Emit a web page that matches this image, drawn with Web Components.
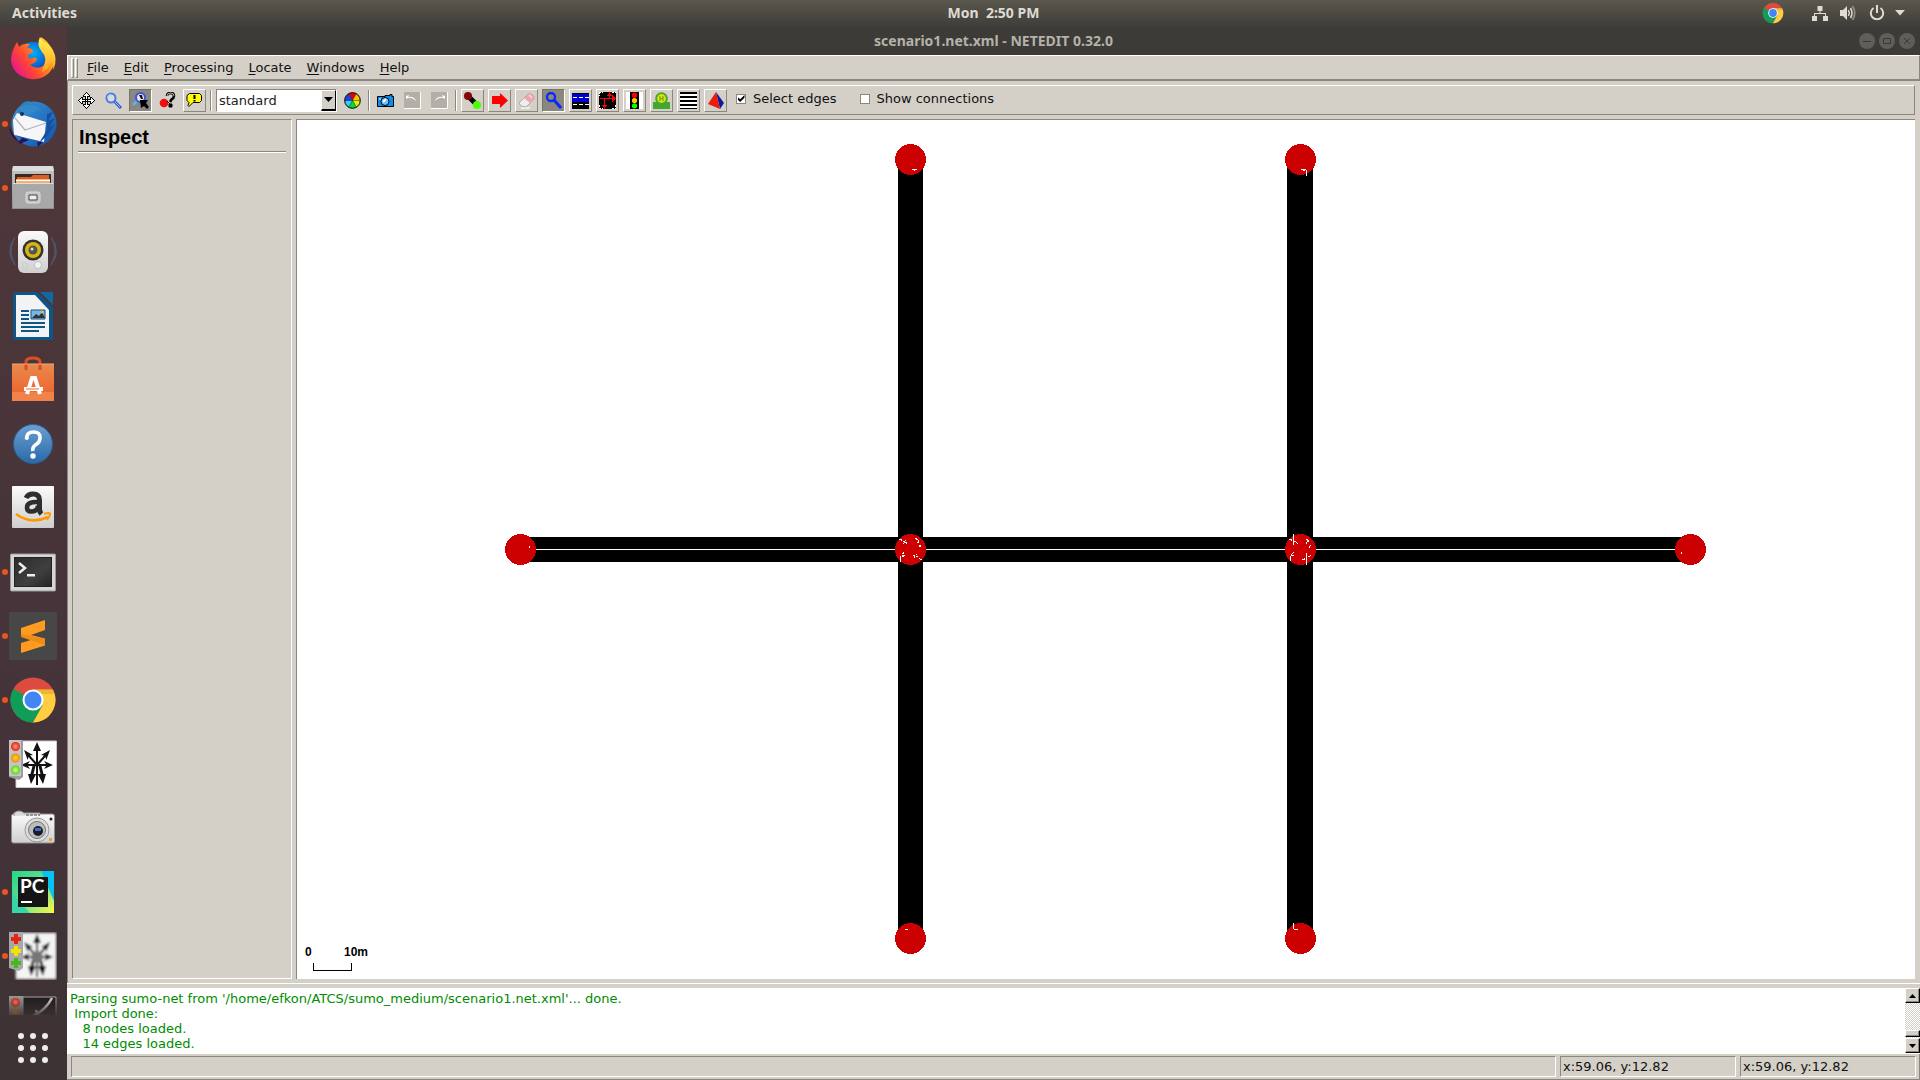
<!DOCTYPE html>
<html lang="en">
<head>
<meta charset="utf-8">
<title>scenario1.net.xml - NETEDIT 0.32.0</title>
<style>
html, body { height: 100%; margin: 0; overflow: hidden; }
body {
  --face: #d4d0c8; --shade: #8a8780; --hilite: #ffffff;
  --ui: "DejaVu Sans", sans-serif; --shell: "Noto Sans", "Open Sans", sans-serif;
  background: #3c3b37; color: #111; font: 13px/15px var(--ui);
}
</style>
</head>
<body>
<desk-shell></desk-shell>
<script>
const define = (name, html, setup) => {
  const tpl = document.createElement('template');
  tpl.innerHTML = html;
  customElements.define(name, class extends HTMLElement {
    constructor() {
      super();
      this.attachShadow({ mode: 'open' }).append(tpl.content.cloneNode(true));
    }
    connectedCallback() { if (setup) setup(this, this.shadowRoot); }
  });
};

const chromeLogo = `
  <circle cx="24" cy="24" r="22.5" fill="#dd4b3e"/>
  <path d="M24 24L4.500 12.750A22.500 22.500 0 0 0 24 46.500L33.700 29.600z" fill="#0f9d58"/>
  <path d="M24 13.500H43.900A22.500 22.500 0 0 1 24 46.500L33.500 29.500z" fill="#ffcd40"/>
  <path d="M24 13.500H43.900l2 4.500H30z" fill="#c98d1c" opacity=".35"/>
  <circle cx="24" cy="24" r="10.500" fill="#fff"/><circle cx="24" cy="24" r="8.500" fill="#4285f4"/>`;

/* ---- desktop ---- */
define('desk-shell', `
<style>
  :host { display: flex; flex-direction: column; height: 100vh; }
  .work { flex: 1; min-height: 0; display: flex; }
  net-window { flex: 1; min-width: 0; }
</style>
<top-bar></top-bar>
<div class="work"><dock-bar></dock-bar><net-window></net-window></div>`);

define('top-bar', `
<style>
  :host { display: grid; grid-template-columns: 67px 1fr auto 1fr; align-items: center; box-sizing: border-box; height: 27px; padding-bottom: 2px; flex: none;
    background: linear-gradient(#5a574e, #3e3d38); color: #dfdbd2; font: bold 14px/20px var(--shell); }
  button { font: inherit; color: inherit; background: none; border: 0; padding: 0; white-space: nowrap; }
  .act { justify-self: start; padding-left: 12px; }
  .clock { grid-column: 3; white-space: pre; }
  .tray { display: flex; justify-content: flex-end; align-items: center; padding-right: 15px; }
  svg { display: block; }
  .chrome { margin-right: 28px; } .net { margin-right: 12px; } .vol { margin-right: 13px; } .pow { margin-right: 10px; }
</style>
<button class="act">Activities</button>
<button class="clock">Mon  2:50 PM</button>
<div class="tray">
  <svg class="chrome" width="22" height="22" viewBox="0 0 48 48">${chromeLogo}</svg>
  <svg class="net" width="16" height="16" viewBox="0 0 16 16" fill="#dfdbd2"><path d="M5.500 1h5v5H8.500v2H14v3h2v5h-5v-5h2V9H3v2h2v5H0v-5h2V8h5.500V6h-2z"/></svg>
  <svg class="vol" width="16" height="16" viewBox="0 0 16 16"><path d="M0 5h3l4-4v14l-4-4H0z" fill="#dfdbd2"/><path d="M8.500 5q1.600 3 0 6M10.500 3q3 5 0 10" fill="none" stroke="#dfdbd2" stroke-width="1.500"/><path d="M12.500 1q4.500 7 0 14" fill="none" stroke="#8d8a82" stroke-width="1.800"/></svg>
  <svg class="pow" width="16" height="16" viewBox="0 0 16 16" fill="none" stroke="#dfdbd2" stroke-width="2"><path d="M4.500 3a6.200 6.200 0 1 0 7 0M8 0v8"/></svg>
  <svg width="10" height="6" viewBox="0 0 10 6"><path d="M0 0h10L5 5.500z" fill="#dfdbd2"/></svg>
</div>`);

define('dock-item', `
<style>
  :host { display: block; flex: none; height: 64px; position: relative; }
  button { all: unset; display: flex; width: 66px; height: 64px; align-items: center; justify-content: center; }
  :host([running])::before { content: ""; position: absolute; left: 2px; top: 29px; width: 6px; height: 6px; border-radius: 50%; background: #e95420; }
  :host([fading]) { -webkit-mask-image: linear-gradient(#000 8px, transparent 30px); mask-image: linear-gradient(#000 8px, transparent 30px); }
</style>
<button><slot></slot></button>`, (el, root) => {
  root.querySelector('button').setAttribute('aria-label', el.getAttribute('label'));
});

const junctionArrows = `
  <g fill="#111"><path d="M27 8h2v37h-2zM28 2l4 9h-8z"/>
  <path d="M12 25l9-4-2 3h18l-2-3 9 4-9 4 2-3H19l2 3z"/>
  <path d="M15 10l9 5-3 .5 8 9-1.500 1.500-8-9-.8 3zM41 10l-9 5 3 .5-8 9 1.500 1.500 8-9 .8 3z"/>
  <path d="M22 44l-3-10h2.500L23.500 26h3l-2 8h2.700zM34 44l3-10h-2.500L32.500 26h-3l2 8h-2.700z"/></g>`;

define('dock-bar', `
<style>
  :host { display: flex; flex-direction: column; width: 67px; flex: none; background: linear-gradient(#503739, #45343a 60%, #3d3234); }
  .apps { flex: 1; min-height: 0; overflow: hidden; display: flex; flex-direction: column; padding-top: 1px; }
  svg { display: block; }
  .grid { all: unset; flex: none; height: 65px; width: 66px; display: flex; align-items: center; justify-content: center; }
</style>
<svg width="0" height="0" style="position:absolute"><defs>
  <radialGradient id="ffb" cx=".5" cy=".3" r=".6"><stop offset="0" stop-color="#00b3f4"/><stop offset=".6" stop-color="#0a66d8"/><stop offset="1" stop-color="#292d8a"/></radialGradient>
  <linearGradient id="ffo" x1="1" y1="0" x2="0" y2=".7"><stop offset="0" stop-color="#fff44f"/><stop offset=".35" stop-color="#ffa21c"/><stop offset=".7" stop-color="#ff4632"/><stop offset="1" stop-color="#e8178c"/></linearGradient>
  <linearGradient id="ffy" x1="0" y1="0" x2="0" y2="1"><stop offset="0" stop-color="#fff44f"/><stop offset="1" stop-color="#ffa01e"/></linearGradient>
  <linearGradient id="tb" x1="0" y1="0" x2="1" y2="1"><stop offset="0" stop-color="#3a9be0"/><stop offset="1" stop-color="#134fa6"/></linearGradient>
  <linearGradient id="gr" x1="0" y1="0" x2="0" y2="1"><stop offset="0" stop-color="#c9c9c9"/><stop offset="1" stop-color="#8e8e8e"/></linearGradient>
  <linearGradient id="wh" x1="0" y1="0" x2="0" y2="1"><stop offset="0" stop-color="#fafafa"/><stop offset="1" stop-color="#cfcfcf"/></linearGradient>
  <linearGradient id="or" x1="0" y1="0" x2="0" y2="1"><stop offset="0" stop-color="#e8894f"/><stop offset="1" stop-color="#ee5f26"/></linearGradient>
  <linearGradient id="bl" x1="0" y1="0" x2="0" y2="1"><stop offset="0" stop-color="#6a9fd4"/><stop offset="1" stop-color="#2a6aa8"/></linearGradient>
  <linearGradient id="dk" x1="0" y1="0" x2="1" y2="1"><stop offset="0" stop-color="#2c2c2c"/><stop offset=".6" stop-color="#3f3f3f"/><stop offset="1" stop-color="#262626"/></linearGradient>
  <linearGradient id="pcg" x1="0" y1="0" x2="1" y2="1"><stop offset="0" stop-color="#21d789"/><stop offset=".5" stop-color="#66e08c"/><stop offset="1" stop-color="#fcf84a"/></linearGradient>
  <radialGradient id="lr"><stop offset="0" stop-color="#ff9b86"/><stop offset="1" stop-color="#e3230c"/></radialGradient>
  <radialGradient id="ly"><stop offset="0" stop-color="#ffd54d"/><stop offset="1" stop-color="#f08c00"/></radialGradient>
  <radialGradient id="lg"><stop offset="0" stop-color="#e2ff8c"/><stop offset="1" stop-color="#4ed411"/></radialGradient>
  <filter id="soft"><feGaussianBlur stdDeviation=".9"/></filter>
</defs></svg>
<nav class="apps">
<dock-item label="Firefox"><svg width="48" height="48" viewBox="0 0 48 48">
  <circle cx="24" cy="24" r="18" fill="url(#ffb)"/>
  <path d="M8 6l2 5q4-4 11-3l-3 4q6 0 6 4l-5 3 1 4q7-3 8 0 0 3-7 6 8 6 16-1 4-5 2-12-8-3-7-15 7 4 10 11 8 14-2 25-10 9-23 5Q2 37 2 22 3 14 8 6z" fill="url(#ffo)"/>
  <path d="M31 1q-4 8 2 15 6 6 1 15l-1 5q8-3 9-12 4 8 1 12 5-8 3-17Q43 9 35 6q-3-2-4-5z" fill="url(#ffy)"/></svg></dock-item>
<dock-item label="Thunderbird" running><svg width="48" height="48" viewBox="0 0 48 48">
  <circle cx="25" cy="24" r="22.500" fill="url(#tb)"/><path d="M9 9Q14 0 21 1l-3 3q10-3 17 5l-15 8-5-4-9 5z" fill="#2b7fc4"/>
  <path d="M4 20l4-7 29 9-2 20L5 35z" fill="#f6f6f8"/><path d="M6 18l10 12 21-7" fill="none" stroke="#b4b4bb" stroke-width="1.200"/>
  <path d="M0 26q0 9 9 16l4-4-9-4zM28 42l6 0-5 5zM4 34l16 6-9 4z" fill="#26145e"/>
  <path d="M9 8l8 8 14-7q-9-8-22-1z" fill="#3288c9"/><path d="M38 14l6-2-5 9 7-3-6 9 6-3-8 12-8 7 8-13z" fill="#174f9e"/><circle cx="13" cy="14" r="2" fill="#12325d"/></svg></dock-item>
<dock-item label="Files" running><svg width="48" height="48" viewBox="0 0 48 48">
  <path d="M4 2h40l1 7v36H3V9z" fill="url(#gr)"/><path d="M4 2h40l1 5H3z" fill="#ddd"/><path d="M6 10h36v10H6z" fill="#3a2b22"/>
  <path d="M8 13h14l2-2h16v9H8z" fill="#d8602b"/><path d="M7 15h34v5H7z" fill="#f4b072"/><path d="M7 16h34v1H7z" fill="#fff"/>
  <path d="M4 19h40v25H4z" fill="#a8a8a8"/><path d="M4 19h40v1H4z" fill="#ddd"/><rect x="17" y="28" width="14" height="11" rx="2" fill="#c4c4c4" stroke="#ddd"/><path d="M20 31h8v5h-8z" fill="#eee" stroke="#444"/></svg></dock-item>
<dock-item label="Rhythmbox"><svg width="48" height="48" viewBox="0 0 48 48">
  <path d="M6 9q-8 14 0 28M42 9q8 14 0 28M3 14q-4 9 0 18M45 14q4 9 0 18" fill="none" stroke="#5577a2" stroke-width="1.500" opacity=".45"/>
  <rect x="9" y="3" width="30" height="42" rx="6" fill="url(#wh)"/><circle cx="24" cy="22" r="10.500" fill="#34332f"/><circle cx="24" cy="22" r="8" fill="#d7b512"/><circle cx="24" cy="22" r="4.500" fill="#55564c"/><circle cx="23" cy="21" r="1.500" fill="#ddd"/><circle cx="29" cy="37" r="3.500" fill="#f3f3f3" stroke="#c0c0c0"/><path d="M14 35h4v5h-4z" fill="none" stroke="#ccc"/></svg></dock-item>
<dock-item label="LibreOffice Writer"><svg width="48" height="48" viewBox="0 0 48 48">
  <path d="M6 0h22l16 16v32H6q-2 0-2-2V2q0-2 2-2z" fill="#0e5586"/><path d="M7 3h19l14 15v27H7z" fill="#f2f3f5"/><path d="M31 0h13v13z" fill="#0f69a6"/>
  <path d="M12 18h8v2h-8zM12 22h8v2h-8zM12 26h8v2h-8zM12 30h24v2H12zM12 34h24v2H12zM12 38h18v2H12z" fill="#0e5586"/><path d="M22 18h14v9H22z" fill="#77b7e6" stroke="#0e5586"/><path d="M23 26l4-4 3 2 3-4 3 6z" fill="#333"/><circle cx="33" cy="20" r="1.500" fill="#f5b82e"/></svg></dock-item>
<dock-item label="Ubuntu Software"><svg width="48" height="48" viewBox="0 0 48 48">
  <path d="M3 8h42v37H3z" fill="url(#or)"/><path d="M3 36h42v9H3z" fill="#f0824a"/><path d="M17 14V6q0-4 7-4t7 4v8" fill="none" stroke="#d84f24" stroke-width="3"/><path d="M3 8h42" stroke="#f4a677"/>
  <path d="M18 38l5-16h3l5 16" fill="none" stroke="#fff" stroke-width="4"/><path d="M15 31h19v4H15z" fill="#fff"/><path d="M17 33h13" stroke="#ee6a30"/></svg></dock-item>
<dock-item label="Help"><svg width="48" height="48" viewBox="0 0 48 48">
  <circle cx="24" cy="24" r="19.500" fill="url(#bl)" stroke="#2c5f92"/><path d="M17.500 19q0-7 7-7t6.500 6q0 4-4 6.500T24 31" fill="none" stroke="#fff" stroke-width="3.600"/><circle cx="17.800" cy="18" r="2" fill="#fff"/><circle cx="24" cy="36" r="2.700" fill="#fff"/></svg></dock-item>
<dock-item label="Amazon"><svg width="48" height="48" viewBox="0 0 48 48">
  <rect x="3" y="2" width="42" height="42" rx="1" fill="url(#wh)"/>
  <path d="M17 14q2-4 7-4 6.500 0 6.500 6v9q0 3 2 5" fill="none" stroke="#2e2e30" stroke-width="5"/><path d="M29 18q-11-.5-11 5.500 0 4 4 4 7 0 7-6" fill="none" stroke="#2e2e30" stroke-width="4.500"/>
  <path d="M7 30q15 11 32 3" fill="none" stroke="#ff9900" stroke-width="2.600"/><path d="M35 30q6-2 6 0t-3 6" fill="none" stroke="#ff9900" stroke-width="2"/></svg></dock-item>
<dock-item label="Terminal" running><svg width="48" height="48" viewBox="0 0 48 48">
  <rect x="1.500" y="6" width="45" height="37" rx="1" fill="#d6d6d6" stroke="#9a9a9a"/><path d="M5 9h38v30H5z" fill="#222"/><path d="M6 10h36v28H6z" fill="url(#dk)"/>
  <path d="M10 15l6 5-6 5" fill="none" stroke="#eee" stroke-width="2.500"/><path d="M18 26h8v2.500h-8z" fill="#eee"/></svg></dock-item>
<dock-item label="Sublime Text" running><svg width="48" height="48" viewBox="0 0 48 48">
  <rect width="48" height="48" rx="2" fill="#474747"/><path d="M12 16l24-8v10l-14 5 14 3.500v7L12 41V31l13-4-13-4z" fill="#ff9b1f"/><path d="M12 22l24 5v6l-24-8z" fill="#ee8c16"/></svg></dock-item>
<dock-item label="Google Chrome" running><svg width="48" height="48" viewBox="0 0 48 48">${chromeLogo}</svg></dock-item>
<dock-item label="SUMO"><svg width="48" height="48" viewBox="0 0 48 48">
  <path d="M7 1h40.500v46.500H7z" fill="#fff" stroke="#ccc"/>${junctionArrows}
  <path d="M0 0h14v37l-4 3L0 37z" fill="#9c9c9c"/><path d="M0 0h12v36H0z" fill="#c4c4c4"/><circle cx="6.500" cy="6.500" r="4.500" fill="url(#lr)"/><circle cx="6.500" cy="18" r="4.500" fill="url(#ly)"/><circle cx="6.500" cy="30" r="4.500" fill="url(#lg)"/></svg></dock-item>
<dock-item label="Camera"><svg width="48" height="48" viewBox="0 0 48 48">
  <rect x="2.500" y="10" width="43" height="29" rx="2" fill="url(#wh)" stroke="#8c8c8c"/><path d="M5 12V9q5-4 10 0l16 0v2" fill="#d8d8d8" stroke="#999"/><path d="M17 11h14" stroke="#777" stroke-width="1.500" stroke-dasharray="3 1"/>
  <circle cx="28" cy="26" r="12" fill="#dcdcdc" stroke="#999"/><circle cx="28" cy="26" r="8.500" fill="#bcbcbc" stroke="#777"/><circle cx="29" cy="27" r="5" fill="#171b2c"/><path d="M26 24h6v3h-6z" fill="#426bb5"/><circle cx="42" cy="15" r="1.500" fill="#222"/><path d="M40 34h3v3h-3z" fill="#f0a030"/></svg></dock-item>
<dock-item label="PyCharm" running><svg width="48" height="48" viewBox="0 0 48 48">
  <path d="M3 3h42v42H3z" fill="url(#pcg)"/><path d="M32 3h13v30z" fill="#07c3f2"/><path d="M3 25v20h18z" fill="#36d6a7"/><path d="M9 9h30v30H9z" fill="#151515"/><text x="11" y="25" font-family="Lato, sans-serif" font-weight="bold" font-size="19" fill="#fff">PC</text><path d="M12 33h11v2H12z" fill="#fff"/></svg></dock-item>
<dock-item label="NETEDIT" running><svg width="48" height="48" viewBox="0 0 48 48"><g filter="url(#soft)">
  <path d="M7 1h40v46H7z" fill="#f4f4f4" stroke="#bbb"/>${junctionArrows}<circle cx="28" cy="25" r="6" fill="#777"/></g>
  <path d="M0 0h14v36l-4 3-10-3z" fill="#a8a8a8"/><g stroke-width="4"><path d="M7 2v10M2 7h10" stroke="#e52416"/><path d="M7 14v10M2 19h10" stroke="#f3e500"/><path d="M7 26v10M2 31h10" stroke="#49b71c"/></g></svg></dock-item>
<dock-item label="sumo-gui" fading><svg width="48" height="48" viewBox="0 0 48 48">
  <path d="M14 1h33v46H14z" fill="#1e1c1e" stroke="#aaa"/><path d="M16 22q18-3 27-20M27 14q2 10 14 14" fill="none" stroke="#ddd" stroke-width="2.500"/><path d="M0 0h14v37H0z" fill="#999"/><circle cx="6.500" cy="6.500" r="4.500" fill="url(#lr)"/><circle cx="6.500" cy="18" r="4.500" fill="url(#ly)"/></svg></dock-item>
</nav>
<button class="grid" aria-label="Show Applications"><svg width="30" height="30" viewBox="0 0 30 30" fill="#f0eeec"><circle cx="3" cy="3" r="3"/><circle cx="15" cy="3" r="3"/><circle cx="27" cy="3" r="3"/><circle cx="3" cy="15" r="3"/><circle cx="15" cy="15" r="3"/><circle cx="27" cy="15" r="3"/><circle cx="3" cy="27" r="3"/><circle cx="15" cy="27" r="3"/><circle cx="27" cy="27" r="3"/></svg></button>`);

/* ---- application window ---- */
define('net-window', `
<style>
  :host { display: flex; flex-direction: column; background: var(--face); }
  .body { flex: 1; min-height: 0; display: flex; flex-direction: column; gap: 4px; padding: 4px 5px 4px 4px; border-left: 1px solid var(--shade); }
  .split { flex: 1; min-height: 0; display: flex; gap: 4px; }
  network-view { flex: 1; min-width: 0; }
  .sash { height: 5px; flex: none; box-sizing: border-box; border-top: 1px solid var(--hilite); }
</style>
<title-bar>scenario1.net.xml - NETEDIT 0.32.0</title-bar>
<menu-bar></menu-bar>
<div class="body">
  <tool-bar></tool-bar>
  <div class="split"><inspect-panel>Inspect</inspect-panel><network-view></network-view></div>
</div>
<div class="sash"></div>
<message-log></message-log>
<status-bar></status-bar>`);

define('title-bar', `
<style>
  :host { display: grid; grid-template-columns: 1fr auto 1fr; align-items: center; height: 28px; flex: none; background: #3c3b37; color: #b5b2a9; font: bold 14px/20px var(--shell); }
  .t { grid-column: 2; }
  .b { display: flex; justify-content: flex-end; gap: 4px; padding-right: 5px; }
  button { all: unset; width: 16px; height: 16px; border-radius: 50%; background: #5f5e59; }
  svg { display: block; } path { fill: none; stroke: #3a3935; stroke-width: 1; }
</style>
<span class="t"><slot></slot></span>
<div class="b">
  <button aria-label="Minimize"><svg width="16" height="16"><path d="M4 8.500h8"/></svg></button>
  <button aria-label="Maximize"><svg width="16" height="16"><path d="M4.500 5.500h7v5h-7z"/></svg></button>
  <button aria-label="Close"><svg width="16" height="16"><path d="M5 5l6 6M11 5l-6 6"/></svg></button>
</div>`);

define('menu-bar', `
<style>
  :host { display: flex; align-items: center; box-sizing: border-box; height: 26px; flex: none; padding-left: 3px; border: 1px solid; border-width: 1px 1px 2px; border-color: var(--hilite) var(--shade) var(--shade) var(--hilite); }
  i { width: 1px; height: 18px; margin-right: 1px; border: 1px solid; border-color: var(--hilite) var(--shade) var(--shade) var(--hilite); }
  nav { display: flex; gap: 15px; padding-left: 8px; }
  button { all: unset; }
  u { text-underline-offset: 2px; }
</style>
<i></i><i></i>
<nav><button><u>F</u>ile</button><button><u>E</u>dit</button><button><u>P</u>rocessing</button><button><u>L</u>ocate</button><button><u>W</u>indows</button><button><u>H</u>elp</button></nav>`);

define('tool-button', `
<style>
  :host { display: block; flex: none; }
  button { all: unset; box-sizing: border-box; width: 23px; height: 23px; display: flex; align-items: center; justify-content: center; border: 1px solid transparent; }
  :host([raised]) button { border-color: var(--hilite) var(--shade) var(--shade) var(--hilite); }
  :host([pressed]) button { background: #8a8780; border-color: #77746e var(--hilite) var(--hilite) #77746e; }
  ::slotted(svg) { display: block; }
</style>
<button><slot></slot></button>`, (el, root) => {
  root.querySelector('button').setAttribute('aria-label', el.getAttribute('label'));
});

define('tool-separator', `
<style>:host { display: block; box-sizing: border-box; width: 2px; height: 21px; border-left: 1px solid var(--shade); border-right: 1px solid var(--hilite); }</style>`);

define('view-scheme', `
<style>
  :host { display: block; position: relative; width: 121px; height: 23px; }
  select { appearance: none; box-sizing: border-box; width: 100%; height: 100%; margin: 0; padding: 0 18px 0 2px; border: 1px solid; border-color: var(--shade) var(--hilite) var(--hilite) var(--shade); border-radius: 0; background: #fff; color: #222; font: inherit; outline: 0; }
  span { position: absolute; right: 1px; top: 1px; width: 15px; height: 21px; box-sizing: border-box; background: var(--face); border: 1px solid; border-width: 1px 1px 2px; border-color: var(--hilite) #000 #000 var(--hilite); display: flex; align-items: center; justify-content: center; pointer-events: none; }
</style>
<select aria-label="View scheme"><option>standard</option><option>real world</option></select>
<span><svg width="9" height="5"><path d="M0 0h9L4.500 5z"/></svg></span>`);

define('tool-bar', `
<style>
  :host { display: flex; align-items: center; gap: 4px; box-sizing: border-box; height: 30px; flex: none; padding: 0 2px; border: 1px solid; border-color: var(--hilite) var(--shade) var(--shade) var(--hilite); }
  label { display: flex; align-items: center; gap: 7px; margin-left: 5px; padding-bottom: 3px; }
  label + label { margin-left: 19px; }
  input { appearance: none; width: 10px; height: 10px; box-sizing: border-box; margin: 0; border: 1px solid #8a8780; background: #fff; display: grid; place-items: center; }
  input:checked::before { content: ""; width: 7px; height: 7px; background: #000; clip-path: polygon(0 30%, 38% 62%, 100% 0, 100% 38%, 38% 100%, 0 65%); }
</style>
<tool-button label="Move view"><svg width="17" height="17" viewBox="0 0 17 17" shape-rendering="crispEdges"><path d="M8 0h1v1h1v1h1v1h1v2h-2v2h2V5h2v1h1v1h1v1h1v1h-1v1h-1v1h-1v1h-2v-2h-2v2h2v2h-1v1h-1v1H9v1H8v-1H7v-1H6v-1H5v-2h2v-2H5v2H3v-1H2v-1H1V9H0V8h1V7h1V6h1V5h2v2h2V5H5V3h1V2h1V1h1z"/><path d="M8 1h1v1h1v1h1v1H9v4h4V6h1v1h1v1h1v1h-1v1h-1v1h-1V9H9v4h2v1h-1v1H9v1H8v-1H7v-1H6v-1h2V9H4v2H3v-1H2V9H1V8h1V7h1V6h1v2h4V4H6V3h1V2h1z" fill="#fff"/><path d="M7 7h3v3H7z" fill="#000"/><path d="M8 8h1v1H8z" fill="#fff"/></svg></tool-button>
<tool-button label="Zoom"><svg width="17" height="17" viewBox="0 0 17 17"><path d="M9 9l7 7" stroke="#3556e0" stroke-width="3"/><path d="M9 9l6 6" stroke="#7fd0f5"/><circle cx="6" cy="6" r="4.500" fill="#dcdcdc" stroke="#4b79e0" stroke-width="2"/><path d="M3 6q0-3 3-3" stroke="#a5e4f8" fill="none" stroke-width="1.500"/></svg></tool-button>
<tool-button label="Zoom style" pressed><svg width="17" height="17" viewBox="0 0 17 17"><path d="M6 8l-5 5" stroke="#5ab4ee" stroke-width="2.500"/><circle cx="8.500" cy="5.500" r="4.500" fill="#e8e8e8" stroke="#3c55dd" stroke-width="2"/><path d="M7 3h3l1 4H9z" fill="#111"/><path d="M8 8h8l-2 3 3 4-2 2-3-3-3 2z" fill="#000"/></svg></tool-button>
<tool-button label="What is this"><svg width="17" height="17" viewBox="0 0 17 17"><circle cx="5" cy="11" r="4.300" fill="#f00d0d"/><path d="M8 4q0-3 3.500-3T15 4q0 2-2.500 3.500L11 10" fill="none" stroke="#000" stroke-width="2.600"/><path d="M8 4q0-3 3.500-3T15 4" fill="none" stroke="#fff" stroke-width=".7"/><path d="M10 12h3v3h-3zM8 9l3 3" fill="#000" stroke="#000"/></svg></tool-button>
<tool-button label="Tooltips" raised><svg width="17" height="17" viewBox="0 0 17 17"><path d="M3.500 1.500h10l2 2v5l-2 2H7l-4 4-1-1 1-3-2-2v-5z" fill="#ff0" stroke="#000"/><path d="M7.500 3h2v4h-2zM7.500 8h2v1.500h-2z"/></svg></tool-button>
<tool-separator></tool-separator>
<view-scheme></view-scheme>
<tool-button label="Edit colours"><svg width="17" height="17" viewBox="-8.500 -8.500 17 17"><g stroke="#222" stroke-width=".4"><path d="M0 0L-4-7A8 8 0 0 1 4-7z" fill="#e00"/><path d="M0 0L4-7A8 8 0 0 1 8 0z" fill="#ffc000"/><path d="M0 0H8A8 8 0 0 1 4 7z" fill="#e8f000"/><path d="M0 0L4 7A8 8 0 0 1-4 7z" fill="#00e030"/><path d="M0 0L-4 7A8 8 0 0 1-8 0z" fill="#2ad2ff"/><path d="M0 0H-8A8 8 0 0 1-4-7z" fill="#2040e8"/></g><circle r="7.700" fill="none" stroke="#222"/></svg></tool-button>
<tool-separator></tool-separator>
<tool-button label="Snapshot"><svg width="17" height="17" viewBox="0 0 17 17"><path d="M.5 4.500H8v-1h5v-1h2v2h1.500V14.500H.5z" fill="#0d8ff2" stroke="#000"/><path d="M2 6h2v2H2z" fill="#7bd0ff"/><circle cx="8" cy="9.500" r="4" fill="#6cc2ff" stroke="#000"/><path d="M6 10l3-3" stroke="#fff" stroke-width="2"/></svg></tool-button>
<tool-button label="Undo"><svg width="17" height="17" viewBox="0 0 17 17"><path d="M0 0h16v16H0z" fill="#b2afa8"/><path d="M16.500 0v16.500H0" stroke="#fff" fill="none"/><path d="M2 4l3-1-1 2q6-1 8 4-4-4-8-3l-2 1z" fill="#fff"/></svg></tool-button>
<tool-button label="Redo"><svg width="17" height="17" viewBox="0 0 17 17"><path d="M0 0h16v16H0z" fill="#b2afa8"/><path d="M16.500 0v16.500H0" stroke="#fff" fill="none"/><path d="M14 4l-3-1 1 2q-6-1-8 4 4-4 8-3l2 1z" fill="#fff"/></svg></tool-button>
<tool-separator></tool-separator>
<tool-button label="Create junction" raised><svg width="17" height="17" viewBox="0 0 17 17"><path d="M4 4l9 9" stroke="#000" stroke-width="5"/><circle cx="4" cy="4" r="4" fill="#800808"/><circle cx="13" cy="13" r="4" fill="#4bff00"/></svg></tool-button>
<tool-button label="Create edge" raised><svg width="17" height="17" viewBox="0 0 17 17"><path d="M1 4h8V1l8 7.500L9 16v-4H1z" fill="#f00"/></svg></tool-button>
<tool-button label="Delete" raised><svg width="17" height="17" viewBox="0 0 17 17"><path d="M3 16h9" stroke="#eee" stroke-width="2"/><path d="M11 1l5 3v3l-8 8-5-1-2-3z" fill="#eee" stroke="#999" stroke-width=".7"/><path d="M11 1l5 3v3l-4 4-6-5z" fill="#f0a4ac"/><path d="M11 3l3 3" stroke="#fcd8dc" stroke-width="1.500"/></svg></tool-button>
<tool-button label="Inspect" pressed><svg width="17" height="17" viewBox="0 0 17 17" fill="none" stroke="#0a28ff"><circle cx="6" cy="5" r="4" stroke-width="2.300"/><path d="M9 8l7 8" stroke-width="3"/></svg></tool-button>
<tool-button label="Select" raised><svg width="17" height="17" viewBox="0 0 17 17" shape-rendering="crispEdges"><path d="M0 1h17v16H0z"/><path d="M0 2h17v8H0z" fill="#0000d0"/><path d="M1 5.500h4M7 5.500h4M13 5.500h4M1 12.500h4M7 12.500h4M13 12.500h4" stroke="#fff"/></svg></tool-button>
<tool-button label="Connections" raised><svg width="17" height="17" viewBox="0 0 17 17" shape-rendering="crispEdges"><path d="M0 0h17v17H0z"/><path d="M0 .5h4M13 .5h4M0 16.500h4M13 16.500h4M.5 0v4M.5 13v4M16.500 13v4" stroke="#fff" stroke-dasharray="2 1"/><path d="M1 6.500h14M10.500 6V2M5.500 6v9" stroke="#f00" fill="none"/><path d="M8 4l2.500-4L13 4zM13 3l4 3.500-4 3.500zM3 13h5l-2.500 4z" fill="#f00"/></svg></tool-button>
<tool-button label="Traffic lights" raised><svg width="17" height="17" viewBox="0 0 17 17"><path d="M0 0h17v17H0z" fill="#fff"/><path d="M4 0h9v17H4z"/><circle cx="8.500" cy="3.200" r="2.600" fill="#f00"/><circle cx="8.500" cy="8.500" r="2.600" fill="#fc0"/><circle cx="8.500" cy="13.800" r="2.600" fill="#1f0"/></svg></tool-button>
<tool-button label="Additionals" raised><svg width="17" height="17" viewBox="0 0 17 17"><path d="M0 10h17v7H0z" fill="#42a830"/><circle cx="8.500" cy="6.500" r="6.300" fill="#42a830"/><circle cx="8.500" cy="6.500" r="4.400" fill="#e8e000"/><path d="M7 4v5M10 4v5M7 6.500h3" stroke="#42a830" fill="none"/></svg></tool-button>
<tool-button label="Crossings" raised><svg width="17" height="17" viewBox="0 0 17 17" shape-rendering="crispEdges"><path d="M0 0h17v17H0z" fill="#fff"/><path d="M0 1h17M0 5h17M0 9h17M0 13h17M0 16.500h17" stroke="#000" stroke-width="2"/></svg></tool-button>
<tool-button label="Polygons" raised><svg width="17" height="17" viewBox="0 0 17 17"><path d="M9 0l8 11-4 6z" fill="#101a9c"/><path d="M9 0l4 17L1 12z" fill="#ec1c0c"/></svg></tool-button>
<label><input type="checkbox" checked>Select edges</label>
<label><input type="checkbox">Show connections</label>`);

define('inspect-panel', `
<style>
  :host { display: block; box-sizing: border-box; width: 220px; flex: none; padding: 5px; border: 1px solid; border-color: var(--shade) var(--hilite) var(--hilite) var(--shade); }
  h1 { margin: 0; padding: 0 1px 2px; font: bold 20px/24px "Liberation Sans", Arial, sans-serif; color: #000; border-bottom: 1px solid var(--shade); box-shadow: 0 1px var(--hilite); }
</style>
<h1><slot></slot></h1>`);

const specks = [
  [899,539,3,1],[901,540,1,1],[905,540,1,1],[903,541,2,1],[904,542,3,1],[906,543,1,1],[903,543,1,1],
  [915,538,2,1],[916,539,2,1],[918,540,1,3],[917,542,2,1],[919,545,2,2],
  [903,552,1,1],[902,553,2,1],[902,555,3,1],[902,556,2,1],[900,556,1,6],
  [916,554,1,1],[913,555,2,1],[914,556,1,2],[916,556,2,1],[919,558,1,1],[920,559,2,1],
  [1293,534,1,11],[1289,539,3,1],[1291,540,1,1],[1294,541,2,1],[1296,542,1,1],[1297,543,1,1],
  [1306,539,2,1],[1307,540,2,2],[1306,542,1,2],[1310,545,1,1],[1309,546,1,2],
  [1293,552,1,1],[1292,553,1,1],[1291,554,1,2],[1292,555,2,1],[1290,556,1,5],
  [1306,553,1,12],[1308,556,2,1],[1310,555,1,1],[1304,558,1,2],[1302,559,2,1],
  [912,169,5,1],[914,170,1,1],[1301,169,5,1],[1303,170,2,1],[1306,170,1,6],
  [905,929,3,1],[1293,923,1,6],[1294,929,4,1],[529,546,1,2],[1681,552,1,2]
].map(([x, y, w, h]) => `M${x} ${y}h${w}v${h}h-${w}z`).join('');
const nodes = [[910,159],[1300,159],[520,549],[910,549],[1300,549],[1690,549],[910,938],[1300,938]]
  .map(([x, y]) => `<circle cx="${x + .5}" cy="${y + .5}" r="15.500"/>`).join('');

define('network-view', `
<style>
  :host { display: block; box-sizing: border-box; background: #fff; border: 1px solid var(--shade); border-width: 1px 0 0 1px; overflow: hidden; }
  svg { display: block; width: 100%; height: 100%; }
</style>
<svg viewBox="297 120 1618 859" shape-rendering="crispEdges">
  <path d="M520 537h1170v25H520zM898 160h25v779h-25zM1287 160h26v779h-26z"/>
  <path d="M520 549h1170v1H520z" fill="#fff"/>
  <g fill="#cc0000">${nodes}</g>
  <path d="${specks}" fill="#fff"/>
  <path d="M313.500 963v7.500h38V963" fill="none" stroke="#000"/>
  <g font-family="Liberation Sans, Arial, sans-serif" font-weight="bold" font-size="12"><text x="305" y="956">0</text><text x="344" y="956">10m</text></g>
</svg>`);

define('message-log', `
<style>
  :host { display: flex; flex: none; height: 66px; background: #fff; }
  pre { flex: 1; margin: 0; padding: 3px; font: inherit; color: #008c00; }
  .bar { width: 15px; display: flex; flex-direction: column; background: repeating-conic-gradient(#fff 0 25%, var(--face) 0 50%) 0 0 / 2px 2px; }
  button, .thumb { all: unset; box-sizing: border-box; height: 15px; background: var(--face); border: 1px solid; border-color: var(--hilite) #000 #000 var(--hilite); box-shadow: inset -1px -1px var(--shade); display: flex; align-items: center; justify-content: center; }
  .track { flex: 1; display: flex; align-items: flex-end; padding-bottom: 1px; }
  .thumb { width: 15px; height: 7px; }
  .foot { height: 1px; background: #fff; }
</style>
<pre>Parsing sumo-net from '/home/efkon/ATCS/sumo_medium/scenario1.net.xml'... done.
 Import done:
   8 nodes loaded.
   14 edges loaded.</pre>
<div class="bar">
  <button aria-label="Scroll up"><svg width="7" height="4"><path d="M0 4h7L3.500 0z"/></svg></button>
  <div class="track"><div class="thumb"></div></div>
  <button aria-label="Scroll down"><svg width="7" height="4"><path d="M0 0h7L3.500 4z"/></svg></button>
  <div class="foot"></div>
</div>`);

define('status-bar', `
<style>
  :host { display: flex; gap: 4px; box-sizing: border-box; height: 26px; flex: none; padding: 2px 3px 2px 4px; border-bottom: 1px solid var(--shade); border-right: 1px solid var(--shade); }
  div { box-sizing: border-box; width: 176px; padding: 2px 2px 0; white-space: nowrap; border: 1px solid; border-color: var(--shade) var(--hilite) var(--hilite) var(--shade); }
  .msg { flex: 1; }
</style>
<div class="msg"></div><div>x:59.06, y:12.82</div><div>x:59.06, y:12.82</div>`);
</script>
</body>
</html>
